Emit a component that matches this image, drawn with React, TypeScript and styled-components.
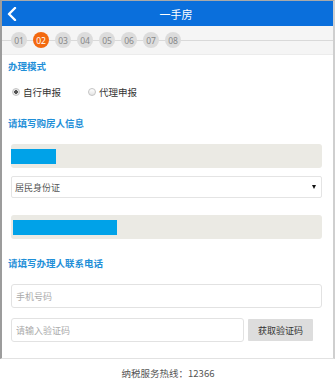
import React from 'react'
import {styled, createGlobalStyle} from 'styled-components'

const GlobalStyle = createGlobalStyle`
  html, body {
    margin: 0;
    padding: 0;
    background: #fff;
    font-family: "Noto Sans CJK SC", "Noto Sans", sans-serif;
  }
`

const steps = ['01', '02', '03', '04', '05', '06', '07', '08']

const Radio = (props: {checked?: boolean, label: string}) => {
    return <RadioLabel>
        <RadioDot checked={props.checked} />
        <span>{props.label}</span>
    </RadioLabel>
}

const BlueInput = (props: {barWidth: number, barLeft: number}) => {
    return <FilledBox>
        <Masked style={{width: props.barWidth, marginLeft: props.barLeft}} />
    </FilledBox>
}

export default function App() {
    return <>
        <GlobalStyle />
        <Frame>
            <Header>
                <BackButton>
                    <svg width="10" height="14" viewBox="0 0 10 14">
                        <polyline points="8,1 2,7 8,13" fill="none" stroke="#fff" strokeWidth="2.4" strokeLinecap="round" strokeLinejoin="round" />
                    </svg>
                </BackButton>
                <Title>一手房</Title>
            </Header>
            <StepBar>
                {steps.map(s => <Step key={s} active={s === '02'}>{s}</Step>)}
            </StepBar>
            <Content>
                <SectionTitle>办理模式</SectionTitle>
                <RadioRow>
                    <Radio checked label={'自行申报'} />
                    <Radio label={'代理申报'} />
                </RadioRow>
                <SectionTitle className={'gap'}>请填写购房人信息</SectionTitle>
                <FieldGroup>
                    <BlueInput barWidth={45} barLeft={0} />
                    <SelectBox>
                        <span>居民身份证</span>
                        <Arrow />
                    </SelectBox>
                    <BlueInput barWidth={104} barLeft={2} />
                </FieldGroup>
                <SectionTitle className={'gap'}>请填写办理人联系电话</SectionTitle>
                <FieldGroup className={'contact'}>
                    <TextInput placeholder={'手机号码'} />
                    <CodeRow>
                        <TextInput placeholder={'请输入验证码'} />
                        <CodeButton>获取验证码</CodeButton>
                    </CodeRow>
                </FieldGroup>
            </Content>
        </Frame>
        <Footer>纳税服务热线：12366</Footer>
    </>
}

const Frame = styled.div`
  box-sizing: border-box;
  width: 335px;
  height: 359px;
  border-top: 1px solid #a9a9a9;
  border-left: 2px solid #9c9c9c;
  border-right: 2px solid #cfcfcf;
  border-bottom: 1px solid #e2e2e2;
  background: #fff;
`

const Header = styled.div`
  height: 25px;
  background: #0a6fdc;
  display: flex;
  align-items: center;
`

const BackButton = styled.div`
  width: 18px;
  padding-left: 5px;
  display: flex;
  align-items: center;
`

const Title = styled.div`
  flex: 1;
  text-align: center;
  color: #fff;
  font-size: 11px;
  padding-right: 6px;
`

const StepBar = styled.div`
  height: 29px;
  background: #f5f5f5;
  border-bottom: 1px solid #ececec;
  box-sizing: border-box;
  display: flex;
  align-items: center;
  gap: 6px;
  padding-left: 9px;
  background-image: linear-gradient(#d9d9d9, #d9d9d9);
  background-size: 100% 1px;
  background-position: 0 14px;
  background-repeat: no-repeat;
`

const Step = styled.div<{active?: boolean}>`
  width: 16px;
  height: 16px;
  border-radius: 50%;
  background: ${p => p.active ? '#f3690f' : '#dcdcdc'};
  color: ${p => p.active ? '#fff' : '#888'};
  font-family: "Noto Sans", sans-serif;
  font-size: 8.5px;
  display: flex;
  align-items: center;
  justify-content: center;
`

const Content = styled.div`
  padding: 4px 11px 0 6px;
`

const SectionTitle = styled.div`
  font-size: 9.5px;
  line-height: 14px;
  font-weight: bold;
  color: #1f8fd8;

  &.gap {
    margin-top: 17px;
  }
`

const RadioRow = styled.div`
  display: flex;
  align-items: center;
  gap: 27px;
  margin-top: 12px;
  padding-left: 4px;
  height: 14px;
`

const RadioLabel = styled.label`
  display: flex;
  align-items: center;
  gap: 3px;
  font-size: 9.5px;
  color: #333;
`

const RadioDot = styled.span<{checked?: boolean}>`
  box-sizing: border-box;
  width: 8px;
  height: 8px;
  border-radius: 50%;
  border: 1px solid #c4c4c4;
  background: ${p => p.checked
    ? 'radial-gradient(circle, #555 0 1.6px, #e6e6e6 2px)'
    : 'linear-gradient(#fff, #e4e4e4)'};
`

const FieldGroup = styled.div`
  display: flex;
  flex-direction: column;
  margin-top: 14px;
  padding-left: 3px;

  &.contact {
    gap: 10px;
  }
`

const FilledBox = styled.div`
  height: 24px;
  border-radius: 3px;
  background: #ebeae4;
  display: flex;
  align-items: center;

  & + div {
    margin-top: 8px;
  }
  div + & {
    margin-top: 17px;
  }
`

const Masked = styled.div`
  height: 15px;
  background: #00a2e8;
`

const SelectBox = styled.div`
  box-sizing: border-box;
  height: 22px;
  border: 1px solid #e4e4e4;
  border-radius: 2px;
  display: flex;
  align-items: center;
  justify-content: space-between;
  padding: 0 5px 0 3px;
  font-size: 9px;
  color: #555;
`

const Arrow = styled.span`
  width: 0;
  height: 0;
  border-left: 2.5px solid transparent;
  border-right: 2.5px solid transparent;
  border-top: 4px solid #111;
`

const TextInput = styled.input`
  box-sizing: border-box;
  width: 100%;
  height: 24px;
  border: 1px solid #e2e2e2;
  border-radius: 3px;
  padding: 0 4px;
  font-family: "Noto Sans CJK SC", sans-serif;
  font-size: 9px;
  outline: none;
  background: #fff;

  &::placeholder {
    color: #aaa;
  }
`

const CodeRow = styled.div`
  display: flex;
  align-items: center;
  gap: 4px;

  ${TextInput} {
    width: 233px;
  }
`

const CodeButton = styled.button`
  width: 65px;
  height: 22px;
  border: none;
  border-radius: 1px;
  background: #dddddd;
  color: #333;
  font-family: "Noto Sans CJK SC", sans-serif;
  font-size: 9px;
  padding: 0;
`

const Footer = styled.div`
  height: 24px;
  border-bottom: 1px solid #dcdcdc;
  display: flex;
  align-items: center;
  justify-content: center;
  padding-top: 2px;
  font-size: 9.5px;
  color: #555;
`
